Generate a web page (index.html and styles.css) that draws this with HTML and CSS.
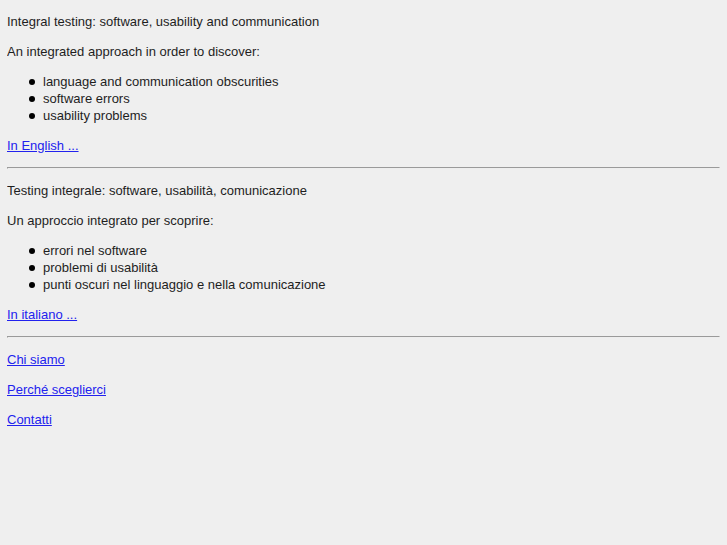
FILE: index.html
```html
<!DOCTYPE html>
<html>
<head>
<meta charset="utf-8">
<link rel="stylesheet" href="styles.css">
</head>
<body>
<p>Integral testing: software, usability and communication</p>
<p>An integrated approach in order to discover:</p>
<ul>
<li>language and communication obscurities</li>
<li>software errors</li>
<li>usability problems</li>
</ul>
<p><a href="#">In English ...</a></p>
<hr>
<p>Testing integrale: software, usabilità, comunicazione</p>
<p>Un approccio integrato per scoprire:</p>
<ul>
<li>errori nel software</li>
<li>problemi di usabilità</li>
<li>punti oscuri nel linguaggio e nella comunicazione</li>
</ul>
<p><a href="#">In italiano ...</a></p>
<hr>
<p><a href="#">Chi siamo</a></p>
<p><a href="#">Perché sceglierci</a></p>
<p><a href="#">Contatti</a></p>
</body>
</html>
```
FILE: styles.css
```css
html { background: #efefef; }
body {
  margin: 0 7px;
  font-family: "Liberation Sans", Arial, sans-serif;
  font-size: 13px;
  line-height: 17px;
  color: #1e1e1e;
}
p { margin: 13px 0; }
ul { margin: 13px 0; padding-left: 36px; list-style: none; }
li::before {
  content: "";
  display: inline-block;
  width: 6px;
  height: 6px;
  border-radius: 50%;
  background: #000;
  margin: 6px 8px 0 -14px;
  vertical-align: top;
}
a { color: #2222ee; }
hr { margin: 8px 0; }
```
